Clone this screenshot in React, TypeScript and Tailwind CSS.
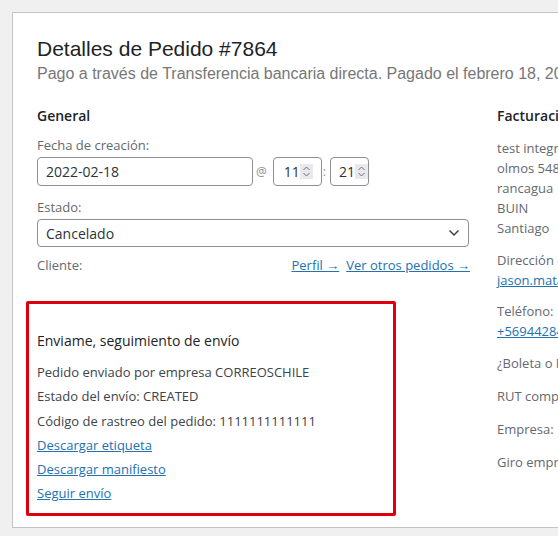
import React from 'react';

const sans = "font-['Open_Sans','Noto_Sans',sans-serif]";

function Spinner() {
  return (
    <span className="flex h-[15px] w-[13px] items-center justify-center bg-[#e9e9ed]">
      <svg width="9" height="13" viewBox="0 0 9 13" fill="none" stroke="#6e6e73" strokeWidth="1">
        <path d="M1.5 5 4.5 2 7.5 5" />
        <path d="M1.5 8 4.5 11 7.5 8" />
      </svg>
    </span>
  );
}

function TimeBox({ value, wide }: { value: string; wide?: boolean }) {
  return (
    <div
      className={`flex h-[29px] items-center rounded-[4px] border border-[#8c8f94] bg-white text-[14px] text-[#2c3338] ${
        wide ? 'w-[49px] pl-[10px]' : 'w-[39px] pl-[8px]'
      }`}
    >
      <span>{value}</span>
      <Spinner />
    </div>
  );
}

export default function App() {
  return (
    <div className={`h-[536px] w-[558px] overflow-hidden bg-[#f0f0f1] pl-[12px] pt-[12px] ${sans}`}>
      <div className="h-[516px] w-[620px] border border-[#c3c4c7] bg-white px-[24px] pt-[23px]">
        {/* Header */}
        <h2 className="font-['Liberation_Sans',Arial,sans-serif] text-[21px] leading-[1.2] text-[#1d2327]">
          Detalles de Pedido #7864
        </h2>
        <p className="whitespace-nowrap font-['Liberation_Sans',Arial,sans-serif] text-[16px] leading-[26px] text-[#777777]">
          Pago a través de Transferencia bancaria directa. Pagado el febrero 18, 2022 @ 11:21 am
        </p>

        <div className="mt-[19px] flex gap-[28px]">
          {/* General column */}
          <div className="w-[432px] shrink-0">
            <h3 className="text-[14px] font-semibold leading-[20px] text-[#1d2327]">General</h3>

            <p className="mt-[9px] text-[13px] leading-[20px] text-[#646970]">Fecha de creación:</p>
            <div className="mt-[2px] flex items-center text-[14px]">
              <div className="flex h-[29px] w-[216px] items-center rounded-[4px] border border-[#8c8f94] bg-white pl-[8px] text-[#2c3338]">
                2022-02-18
              </div>
              <span className="ml-[3px] mr-[6px] text-[12px] text-[#8c8f94]">@</span>
              <TimeBox value="11" wide />
              <span className="ml-[1px] mr-[4px] text-[12px] text-[#8c8f94]">:</span>
              <TimeBox value="21" />
            </div>

            <p className="mt-[11px] text-[13px] leading-[20px] text-[#646970]">Estado:</p>
            <div className="mt-[2px] flex h-[28px] w-[432px] items-center justify-between rounded-[4px] border border-[#8c8f94] bg-white pl-[8px] pr-[8px] text-[14px] text-[#2c3338]">
              <span>Cancelado</span>
              <svg width="12" height="8" viewBox="0 0 12 8" fill="none" stroke="#3c434a" strokeWidth="1.5">
                <path d="M1.5 1.5 6 6 10.5 1.5" />
              </svg>
            </div>

            <div className="mt-[8px] flex items-center justify-between text-[13px] leading-[20px]">
              <span className="text-[#646970]">Cliente:</span>
              <span className="mr-[-1px] flex gap-[7px] text-[#2271b1]">
                <a className="underline">Perfil →</a>
                <a className="underline">Ver otros pedidos →</a>
              </span>
            </div>

            {/* Shipping tracking box */}
            <div className="ml-[-11px] mt-[26px] h-[215px] w-[370px] rounded-[2px] border-[3px] border-[#e0000b] pl-[8px] pt-[27px]">
              <h4 className="text-[14px] leading-[20px] text-[#1d2327]">Enviame, seguimiento de envío</h4>
              <div className="mt-[9px] flex flex-col text-[13px] leading-[24.2px] text-[#3c434a]">
                <p>Pedido enviado por empresa CORREOSCHILE</p>
                <p>Estado del envío: CREATED</p>
                <p>Código de rastreo del pedido: 1111111111111</p>
                <a className="text-[#2271b1] underline">Descargar etiqueta</a>
                <a className="text-[#2271b1] underline">Descargar manifiesto</a>
                <a className="text-[#2271b1] underline">Seguir envío</a>
              </div>
            </div>
          </div>

          {/* Billing column */}
          <div className="shrink-0 whitespace-nowrap text-[13px] leading-[20px] text-[#646970]">
            <h3 className="text-[14px] font-semibold leading-[20px] text-[#1d2327]">Facturación</h3>
            <p className="mt-[12px]">
              test integración
              <br />
              olmos 548
              <br />
              rancagua
              <br />
              BUIN
              <br />
              Santiago
            </p>
            <p className="mt-[12px]">
              Dirección de correo electrónico:
              <br />
              <a className="text-[#2271b1] underline">jason.matamala@enviame.io</a>
            </p>
            <p className="mt-[11px]">
              Teléfono:
              <br />
              <a className="text-[#2271b1] underline">+56944284110</a>
            </p>
            <p className="mt-[12px]">¿Boleta o Factura?: Boleta</p>
            <p className="mt-[13px]">RUT compañía:</p>
            <p className="mt-[13px]">Empresa:</p>
            <p className="mt-[13px]">Giro empresa:</p>
          </div>
        </div>
      </div>
    </div>
  );
}
